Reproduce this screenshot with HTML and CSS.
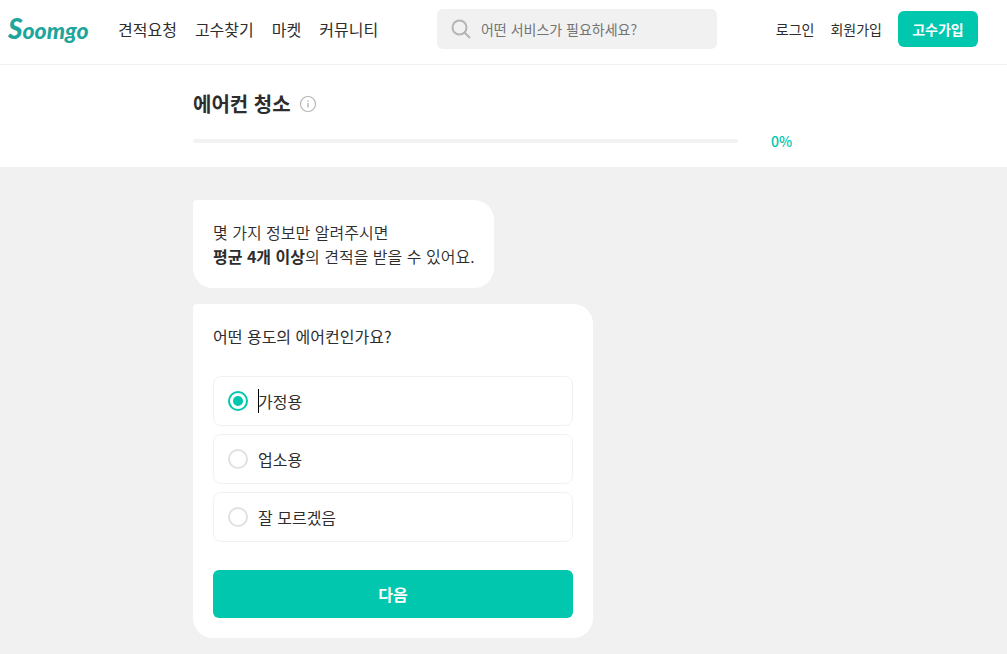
FILE: index.html
```html
<!DOCTYPE html>
<html lang="ko">
<head>
<meta charset="utf-8">
<meta name="viewport" content="width=device-width, initial-scale=1">
<title>에어컨 청소 - Soomgo</title>
<link rel="stylesheet" href="styles.css">
</head>
<body>
<header class="header">
  <a class="logo" href="#"><span class="logo-initial">S</span>oomgo</a>
  <nav class="menu">
    <a href="#">견적요청</a>
    <a href="#">고수찾기</a>
    <a href="#">마켓</a>
    <a href="#">커뮤니티</a>
  </nav>
  <form class="search" role="search">
    <svg class="search-icon" viewBox="0 0 20 20" aria-hidden="true"><circle cx="8.5" cy="8.5" r="7"/><path d="M13.5 13.5l5.500 5.500"/></svg>
    <input class="search-input" type="search" placeholder="어떤 서비스가 필요하세요?" aria-label="서비스 검색">
  </form>
  <div class="account">
    <a href="#">로그인</a>
    <a href="#">회원가입</a>
    <button class="join" type="button">고수가입</button>
  </div>
</header>
<section class="progress">
  <div class="container">
    <div class="title-row">
      <h1 class="title">에어컨 청소</h1>
      <button class="info" type="button" aria-label="안내">
        <svg viewBox="0 0 18 18" aria-hidden="true"><circle class="info-ring" cx="9" cy="9" r="7.5"/><path class="info-mark" d="M8.3 5.300h1.400v1.400H8.300zM8.300 8h1.400v4.600H8.300z"/></svg>
      </button>
    </div>
    <div class="progress-row">
      <div class="track" role="progressbar" aria-label="진행률" aria-valuenow="0" aria-valuemin="0" aria-valuemax="100"></div>
      <span class="percent">0%</span>
    </div>
  </div>
</section>
<main class="container chat">
  <p class="bubble intro">몇 가지 정보만 알려주시면<br><strong>평균 4개 이상</strong>의 견적을 받을 수 있어요.</p>
  <form class="bubble question">
    <fieldset class="options">
      <legend class="legend">어떤 용도의 에어컨인가요?</legend>
      <label class="option"><input class="radio" type="radio" name="usage" checked><span class="option-text caret">가정용</span></label>
      <label class="option"><input class="radio" type="radio" name="usage"><span class="option-text">업소용</span></label>
      <label class="option"><input class="radio" type="radio" name="usage"><span class="option-text">잘 모르겠음</span></label>
    </fieldset>
    <button class="next" type="button">다음</button>
  </form>
</main>
</body>
</html>
```
FILE: styles.css
```css
* { box-sizing: border-box; }
body {
  margin: 0;
  background: #f1f1f1;
  color: #2d2d2d;
  font: 16px/24px "Noto Sans CJK KR", sans-serif;
}
a { color: inherit; text-decoration: none; white-space: nowrap; }
button, input { font: inherit; }
button { border: 0; padding: 0; cursor: pointer; }

.header {
  display: flex;
  align-items: center;
  padding: 9px 29px 15px 8px;
  background: #fff;
  border-bottom: 1px solid #f1f1f1;
}
.logo {
  width: 80px;
  margin-right: 30px;
  color: #1fa69c;
  font: italic 900 23px/32px Lato, sans-serif;
}
.logo-initial { font-size: 28px; }
.menu { display: flex; gap: 18px; }
.search {
  display: flex;
  align-items: center;
  gap: 10px;
  width: 280px;
  height: 40px;
  margin: 0 auto;
  padding: 0 14px;
  border-radius: 6px;
  background: #f1f1f1;
}
.search-icon {
  flex: none;
  width: 20px;
  height: 20px;
  fill: none;
  stroke: #b5b5b5;
  stroke-width: 2;
}
.search-input {
  flex: 1;
  min-width: 0;
  padding: 0;
  border: 0;
  outline: 0;
  background: none;
  font-size: 14px;
}
.search-input::placeholder { color: #737373; opacity: 1; }
.account {
  display: flex;
  align-items: center;
  gap: 16px;
  font-size: 14px;
}
.join {
  width: 80px;
  height: 36px;
  border-radius: 6px;
  background: #00c7ae;
  color: #fff;
  font-weight: 700;
}

.container { max-width: 621px; margin: 0 auto; }
.progress { padding: 25px 0 16px; background: #fff; }
.title-row { display: flex; align-items: center; gap: 8px; }
.title { margin: 0; font-size: 20px; line-height: 28px; font-weight: 700; }
.info { width: 18px; height: 18px; background: none; }
.info svg { display: block; width: 18px; height: 18px; }
.info-ring { fill: none; stroke: #b5b5b5; stroke-width: 1.2; }
.info-mark { fill: #b5b5b5; }
.progress-row { display: flex; align-items: center; gap: 33px; margin-top: 13px; }
.track { flex: 1; height: 4px; border-radius: 2px; background: #f2f2f2; }
.percent { width: 43px; color: #00c7ae; font-size: 14px; line-height: 20px; font-weight: 500; }

.chat {
  display: flex;
  flex-direction: column;
  align-items: flex-start;
  gap: 16px;
  padding: 33px 0 16px;
}
.bubble {
  margin: 0;
  padding: 20px;
  border-radius: 4px 20px 20px 20px;
  background: #fff;
}
.intro { font-weight: 350; }
.intro strong { font-weight: 700; }
.question { width: 100%; max-width: 400px; }
.options {
  display: flex;
  flex-direction: column;
  gap: 8px;
  margin: 0;
  padding: 0;
  border: 0;
}
.legend { margin-bottom: 28px; padding: 0; }
.option {
  display: flex;
  align-items: center;
  gap: 10px;
  height: 50px;
  padding: 0 14px;
  border: 1px solid #f1f1f1;
  border-radius: 8px;
}
.radio {
  appearance: none;
  display: grid;
  place-items: center;
  flex: none;
  width: 20px;
  height: 20px;
  margin: 0;
  border: 2px solid #e1e1e1;
  border-radius: 50%;
}
.radio:checked { border-color: #00c7ae; }
.radio:checked::before {
  content: "";
  width: 10px;
  height: 10px;
  border-radius: 50%;
  background: #00c7ae;
}
.option-text { position: relative; }
.caret::before {
  content: "";
  position: absolute;
  top: 0;
  left: 0;
  width: 1px;
  height: 24px;
  background: #000;
}
.next {
  width: 100%;
  height: 48px;
  margin-top: 28px;
  border-radius: 6px;
  background: #00c7ae;
  color: #fff;
  font-weight: 700;
}
```
